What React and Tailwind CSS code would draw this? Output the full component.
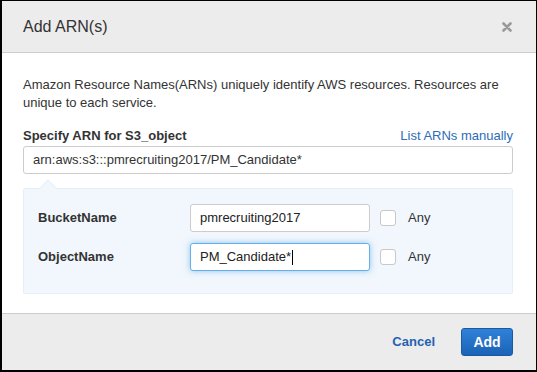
import React from 'react';

const font = { fontFamily: '"Liberation Sans", Arial, sans-serif' };

const Field = ({ label, value, focused }) => (
  <div className="flex items-center h-[28px]">
    <div className="w-[152px] text-[13px] font-bold text-[#333]">{label}</div>
    <div
      className={`w-[180px] h-[28px] flex items-center px-[9px] bg-white rounded-[3px] border text-[13px] text-[#222] ${
        focused ? 'border-[#66afe9] shadow-[0_0_6px_rgba(102,175,233,0.7)]' : 'border-[#cccccc]'
      }`}
    >
      {value}
      {focused && <span className="inline-block w-px h-[15px] bg-black ml-px" />}
    </div>
    <span className="ml-[10px] w-[16px] h-[16px] rounded-[3px] border border-[#c8c8c8] bg-white" />
    <span className="ml-[12px] text-[13px] text-[#333]">Any</span>
  </div>
);

export default function App() {
  return (
    <div style={font} className="w-[537px] h-[372px] bg-black p-px pl-[2px] pb-[2px]">
      <div className="w-full h-full bg-white flex flex-col">
        {/* Header */}
        <div className="h-[52px] shrink-0 bg-[#ececec] border-b border-[#cdcdcd] flex items-center justify-between pl-[21px] pr-[24px]">
          <h1 className="text-[16px] text-[#333]">Add ARN(s)</h1>
          <svg width="10" height="10" viewBox="0 0 10 10">
            <path d="M1.5 1.5 L8.5 8.5 M8.5 1.5 L1.5 8.5" stroke="#9a9a9a" strokeWidth="2.6" strokeLinecap="round" />
          </svg>
        </div>

        {/* Body */}
        <div className="flex-1 pl-[21px] pr-[23px] pt-[23px]">
          <p className="text-[13px] leading-[18px] text-[#333]">
            Amazon Resource Names(ARNs) uniquely identify AWS resources. Resources are unique to each service.
          </p>

          <div className="mt-[15px] flex items-center justify-between h-[18px]">
            <span className="text-[13px] font-bold text-[#333]">Specify ARN for S3_object</span>
            <a className="text-[13px] text-[#2d6cb8]">List ARNs manually</a>
          </div>
          <div className="mt-px h-[28px] flex items-center px-[9px] bg-white border border-[#cccccc] rounded-[3px] text-[13px] text-[#333]">
            arn:aws:s3:::pmrecruiting2017/PM_Candidate*
          </div>

          {/* Resource panel */}
          <div className="relative mt-[14px] bg-[#f1f7fc] border border-[#e6eff7] rounded-[2px] pl-[14px] pt-[15px] pb-[22px] flex flex-col gap-[11px]">
            <span className="absolute -top-[7px] left-[18px] w-[12px] h-[12px] rotate-45 bg-[#f1f7fc] border-l border-t border-[#e6eff7]" />
            <Field label="BucketName" value="pmrecruiting2017" />
            <Field label="ObjectName" value="PM_Candidate*" focused />
          </div>
        </div>

        {/* Footer */}
        <div className="h-[57px] shrink-0 bg-[#ececec] border-t border-[#cdcdcd] flex items-center justify-end pr-[23px]">
          <button className="text-[13px] font-bold text-[#1f62b3] mr-[26px]">Cancel</button>
          <button className="w-[52px] h-[28px] rounded-[3px] border border-[#1b5aa3] bg-gradient-to-b from-[#2f82d8] to-[#1b63b6] text-white text-[14px] font-bold">
            Add
          </button>
        </div>
      </div>
    </div>
  );
}
